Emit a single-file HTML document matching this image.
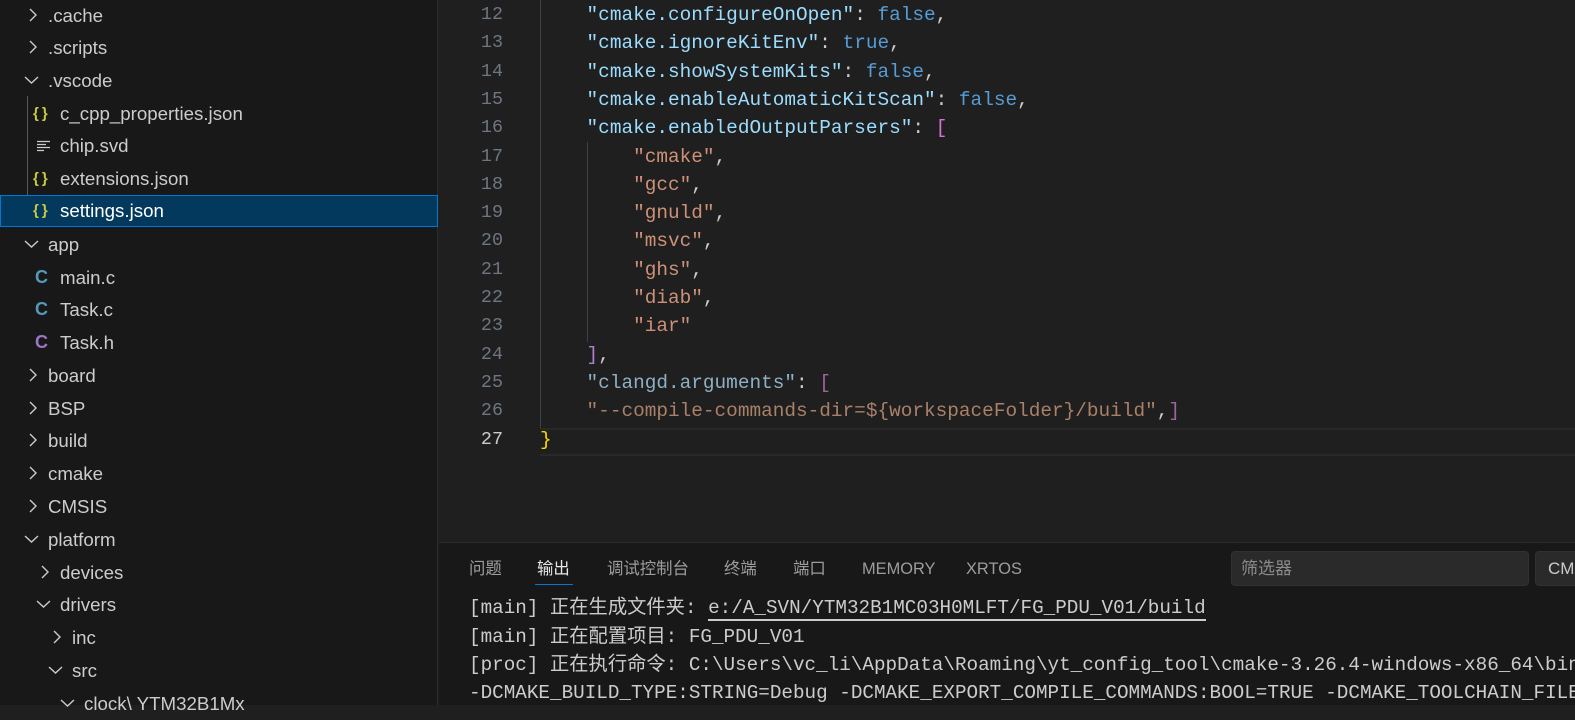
<!DOCTYPE html>
<html><head><meta charset="utf-8"><style>
*{margin:0;padding:0;box-sizing:border-box}
body{width:1575px;height:705px;overflow:hidden;background:#1f1f1f;position:relative;font-family:"Segoe UI","Liberation Sans","Noto Sans CJK SC",sans-serif}
#side{position:absolute;left:0;top:0;width:438px;height:705px;background:#181818;border-right:1px solid #2b2b2b}
.r{position:absolute;left:0;width:438px;height:33px;line-height:33px;color:#cccccc;font-size:18.7px;white-space:nowrap}
.r span{position:absolute}
.r svg{position:absolute;top:9px}
.sel{background:#04395e;border:1px solid #0078d4}
.ic{font-weight:bold;font-size:18px}
.br{color:#cbcb41;font-size:15px;font-family:"Liberation Sans",sans-serif;font-weight:bold}
#ed{position:absolute;left:439px;top:0;width:1136px;height:542px;background:#1f1f1f;font-family:"Liberation Mono",monospace;font-size:19.4px}
.l{position:absolute;left:0;height:28.3px;line-height:28.3px;white-space:pre;width:1136px}
.n{position:absolute;left:0;width:64px;text-align:right;color:#6e7681;font-size:18.4px}
.c{position:absolute;left:101px;color:#cccccc}
.k{color:#9cdcfe}.s{color:#ce9178}.b{color:#569cd6}.p{color:#da70d6}.y{color:#ffd700}
#pan{position:absolute;left:439px;top:542px;width:1136px;height:163px;background:#181818;border-top:1px solid #2b2b2b}
.t{position:absolute;top:14px;font-size:16.4px;color:#9d9d9d;line-height:24px}
.o{position:absolute;left:30px;font-family:"Liberation Mono","Noto Sans CJK SC",monospace;font-size:19.3px;color:#cccccc;white-space:pre;line-height:28px}
</style></head><body>
<div id="side">
<div style="position:absolute;left:27px;top:96px;width:1px;height:131px;background:#585858"></div>
<div class="r" style="top:-1px"><svg style="left:27px" width="12" height="14"><polyline points="3,1 9,7 3,13" fill="none" stroke="#ccc" stroke-width="1.4"/></svg><span style="left:48px">.cache</span></div>
<div class="r" style="top:31px"><svg style="left:27px" width="12" height="14"><polyline points="3,1 9,7 3,13" fill="none" stroke="#ccc" stroke-width="1.4"/></svg><span style="left:48px">.scripts</span></div>
<div class="r" style="top:64px"><svg style="left:24px;top:11px" width="16" height="10"><polyline points="1,2 7.5,8 14,2" fill="none" stroke="#ccc" stroke-width="1.4"/></svg><span style="left:48px">.vscode</span></div>
<div class="r" style="top:97px"><span class="br" style="left:33px">{&thinsp;}</span><span style="left:60px">c_cpp_properties.json</span></div>
<div class="r" style="top:129px"><svg style="left:37px;top:11px" width="14" height="12"><path d="M0 1.5H13M0 4.5H9M0 7.5H13M0 10.5H7" stroke="#ccc" stroke-width="1.3"/></svg><span style="left:60px">chip.svd</span></div>
<div class="r" style="top:162px"><span class="br" style="left:33px">{&thinsp;}</span><span style="left:60px">extensions.json</span></div>
<div class="r sel" style="top:195px;height:32px;line-height:30px"><span class="br" style="left:32px">{&thinsp;}</span><span style="left:59px;color:#fff">settings.json</span></div>
<div class="r" style="top:228px"><svg style="left:24px;top:11px" width="16" height="10"><polyline points="1,2 7.5,8 14,2" fill="none" stroke="#ccc" stroke-width="1.4"/></svg><span style="left:48px">app</span></div>
<div class="r" style="top:261px"><span class="ic" style="left:35px;color:#519aba">C</span><span style="left:60px">main.c</span></div>
<div class="r" style="top:293px"><span class="ic" style="left:35px;color:#519aba">C</span><span style="left:60px">Task.c</span></div>
<div class="r" style="top:326px"><span class="ic" style="left:35px;color:#a074c4">C</span><span style="left:60px">Task.h</span></div>
<div class="r" style="top:359px"><svg style="left:27px" width="12" height="14"><polyline points="3,1 9,7 3,13" fill="none" stroke="#ccc" stroke-width="1.4"/></svg><span style="left:48px">board</span></div>
<div class="r" style="top:392px"><svg style="left:27px" width="12" height="14"><polyline points="3,1 9,7 3,13" fill="none" stroke="#ccc" stroke-width="1.4"/></svg><span style="left:48px">BSP</span></div>
<div class="r" style="top:424px"><svg style="left:27px" width="12" height="14"><polyline points="3,1 9,7 3,13" fill="none" stroke="#ccc" stroke-width="1.4"/></svg><span style="left:48px">build</span></div>
<div class="r" style="top:457px"><svg style="left:27px" width="12" height="14"><polyline points="3,1 9,7 3,13" fill="none" stroke="#ccc" stroke-width="1.4"/></svg><span style="left:48px">cmake</span></div>
<div class="r" style="top:490px"><svg style="left:27px" width="12" height="14"><polyline points="3,1 9,7 3,13" fill="none" stroke="#ccc" stroke-width="1.4"/></svg><span style="left:48px">CMSIS</span></div>
<div class="r" style="top:523px"><svg style="left:24px;top:11px" width="16" height="10"><polyline points="1,2 7.5,8 14,2" fill="none" stroke="#ccc" stroke-width="1.4"/></svg><span style="left:48px">platform</span></div>
<div class="r" style="top:556px"><svg style="left:39px" width="12" height="14"><polyline points="3,1 9,7 3,13" fill="none" stroke="#ccc" stroke-width="1.4"/></svg><span style="left:60px">devices</span></div>
<div class="r" style="top:588px"><svg style="left:36px;top:11px" width="16" height="10"><polyline points="1,2 7.5,8 14,2" fill="none" stroke="#ccc" stroke-width="1.4"/></svg><span style="left:60px">drivers</span></div>
<div class="r" style="top:621px"><svg style="left:51px" width="12" height="14"><polyline points="3,1 9,7 3,13" fill="none" stroke="#ccc" stroke-width="1.4"/></svg><span style="left:72px">inc</span></div>
<div class="r" style="top:654px"><svg style="left:48px;top:11px" width="16" height="10"><polyline points="1,2 7.5,8 14,2" fill="none" stroke="#ccc" stroke-width="1.4"/></svg><span style="left:72px">src</span></div>
<div class="r" style="top:687px"><svg style="left:60px;top:11px" width="16" height="10"><polyline points="1,2 7.5,8 14,2" fill="none" stroke="#ccc" stroke-width="1.4"/></svg><span style="left:84px">clock\ YTM32B1Mx</span></div>
</div>
<div id="ed">
<div style="position:absolute;left:101px;top:0;width:1px;height:428px;background:#404040"></div>
<div style="position:absolute;left:148px;top:142px;width:1px;height:200px;background:#404040"></div>
<div style="position:absolute;left:101px;top:428px;width:1035px;height:28px;border-top:2px solid #282828;border-bottom:2px solid #282828"></div>
<div class="l" style="top:1px"><span class="n">12</span><span class="c">    <span class="k">"cmake.configureOnOpen"</span>: <span class="b">false</span>,</span></div>
<div class="l" style="top:29.3px"><span class="n">13</span><span class="c">    <span class="k">"cmake.ignoreKitEnv"</span>: <span class="b">true</span>,</span></div>
<div class="l" style="top:57.6px"><span class="n">14</span><span class="c">    <span class="k">"cmake.showSystemKits"</span>: <span class="b">false</span>,</span></div>
<div class="l" style="top:85.9px"><span class="n">15</span><span class="c">    <span class="k">"cmake.enableAutomaticKitScan"</span>: <span class="b">false</span>,</span></div>
<div class="l" style="top:114.2px"><span class="n">16</span><span class="c">    <span class="k">"cmake.enabledOutputParsers"</span>: <span class="p">[</span></span></div>
<div class="l" style="top:142.5px"><span class="n">17</span><span class="c">        <span class="s">"cmake"</span>,</span></div>
<div class="l" style="top:170.8px"><span class="n">18</span><span class="c">        <span class="s">"gcc"</span>,</span></div>
<div class="l" style="top:199.1px"><span class="n">19</span><span class="c">        <span class="s">"gnuld"</span>,</span></div>
<div class="l" style="top:227.4px"><span class="n">20</span><span class="c">        <span class="s">"msvc"</span>,</span></div>
<div class="l" style="top:255.7px"><span class="n">21</span><span class="c">        <span class="s">"ghs"</span>,</span></div>
<div class="l" style="top:284px"><span class="n">22</span><span class="c">        <span class="s">"diab"</span>,</span></div>
<div class="l" style="top:312.3px"><span class="n">23</span><span class="c">        <span class="s">"iar"</span></span></div>
<div class="l" style="top:340.6px"><span class="n">24</span><span class="c">    <span style="color:#b07fd0">]</span>,</span></div>
<div class="l" style="top:368.9px"><span class="n">25</span><span class="c">    <span style="color:#8fb0c4">"clangd.arguments"</span>: <span style="color:#a0649c">[</span></span></div>
<div class="l" style="top:397.2px"><span class="n">26</span><span class="c">    <span style="color:#a98068">"--compile-commands-dir=${workspaceFolder}/build"</span>,<span style="color:#a0649c">]</span></span></div>
<div class="l" style="top:425.5px"><span class="n" style="color:#cccccc">27</span><span class="c"><span class="y">}</span></span></div>
</div>
<div id="pan">
<span class="t" style="left:30px">问题</span>
<span class="t" style="left:98px;color:#e7e7e7">输出</span>
<div style="position:absolute;left:96px;top:41px;width:38px;height:1px;background:#0078d4"></div>
<span class="t" style="left:168px">调试控制台</span>
<span class="t" style="left:285px">终端</span>
<span class="t" style="left:354px">端口</span>
<span class="t" style="left:423px">MEMORY</span>
<span class="t" style="left:527px">XRTOS</span>
<div style="position:absolute;left:792px;top:8px;width:298px;height:35px;background:#2a2a2a;border-radius:4px;border:1px solid #313131;color:#8b8b8b;font-size:17px;line-height:33px;padding-left:9px">筛选器</div>
<div style="position:absolute;left:1096px;top:8px;width:60px;height:35px;background:#2a2a2a;border-radius:4px;border:1px solid #313131;color:#ccc;font-size:17px;line-height:33px;padding-left:12px">CM</div>
<div class="o" style="top:51px">[main] 正在生成文件夹: <span style="border-bottom:2px solid #ccc">e:/A_SVN/YTM32B1MC03H0MLFT/FG_PDU_V01/build</span></div>
<div class="o" style="top:80px">[main] 正在配置项目: FG_PDU_V01</div>
<div class="o" style="top:108px">[proc] 正在执行命令: C:\Users\vc_li\AppData\Roaming\yt_config_tool\cmake-3.26.4-windows-x86_64\bin</div>
<div class="o" style="top:136px">-DCMAKE_BUILD_TYPE:STRING=Debug -DCMAKE_EXPORT_COMPILE_COMMANDS:BOOL=TRUE -DCMAKE_TOOLCHAIN_FILE</div>
</div>
</body></html>
